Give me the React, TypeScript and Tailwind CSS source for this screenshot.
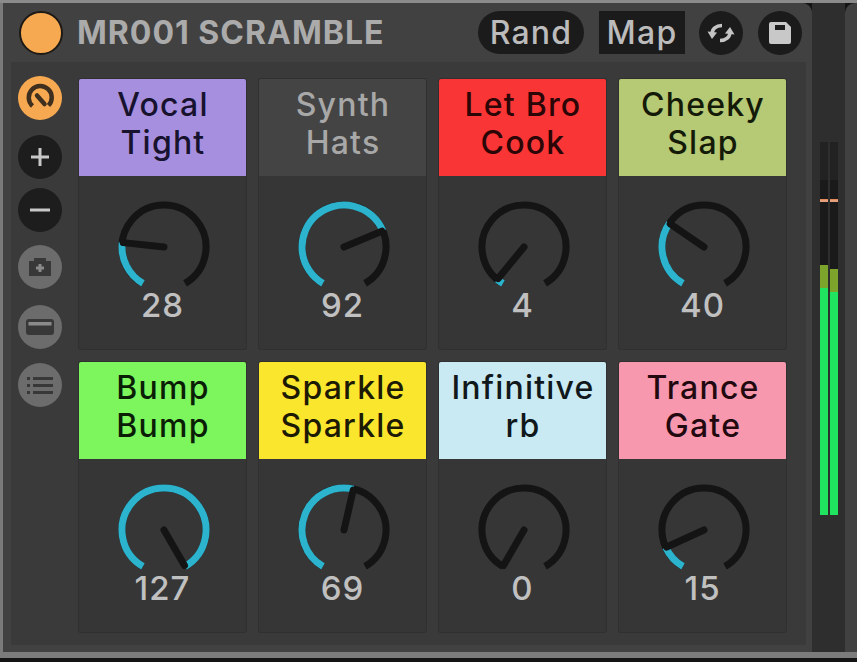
import React from "react";

const FONT = { fontFamily: 'Inter, "Liberation Sans", sans-serif' };

type Pad = { a: string; b: string; value: number; bg: string; text: string };

const pads: Pad[] = [
  { a: "Vocal", b: "Tight", value: 28, bg: "bg-[#a78fdf]", text: "text-[#17122e]" },
  { a: "Synth", b: "Hats", value: 92, bg: "bg-[#444444]", text: "text-[#a8a8a8]" },
  { a: "Let Bro", b: "Cook", value: 4, bg: "bg-[#f93535]", text: "text-[#2c0606]" },
  { a: "Cheeky", b: "Slap", value: 40, bg: "bg-[#b6c975]", text: "text-[#141a08]" },
  { a: "Bump", b: "Bump", value: 127, bg: "bg-[#7df65e]", text: "text-[#0a1e06]" },
  { a: "Sparkle", b: "Sparkle", value: 69, bg: "bg-[#fbe62e]", text: "text-[#1d1a04]" },
  { a: "Infinitive", b: "rb", value: 0, bg: "bg-[#c9e9f3]", text: "text-[#10181b]" },
  { a: "Trance", b: "Gate", value: 15, bg: "bg-[#f798ae]", text: "text-[#22090f]" },
];

function polar(r: number, deg: number) {
  const t = (deg * Math.PI) / 180;
  return [50 + r * Math.sin(t), 50 - r * Math.cos(t)];
}

function arc(r: number, from: number, to: number) {
  const [x1, y1] = polar(r, from);
  const [x2, y2] = polar(r, to);
  const large = to - from > 180 ? 1 : 0;
  return `M${x1} ${y1}A${r} ${r} 0 ${large} 1 ${x2} ${y2}`;
}

function Knob({ value }: { value: number }) {
  const start = -150;
  const end = 150;
  const angle = start + (value / 127) * (end - start);
  const [px, py] = polar(41, angle);
  return (
    <svg width="100" height="100" viewBox="0 0 100 100" className="block">
      <path d={arc(42, start, end)} fill="none" stroke="#141414" strokeWidth="7" />
      {value > 0 && <path d={arc(42, start, angle)} fill="none" stroke="#2cb3cd" strokeWidth="7" />}
      <line x1="50" y1="50" x2={px} y2={py} stroke="#141414" strokeWidth="7" strokeLinecap="round" />
    </svg>
  );
}

function PadCard({ pad }: { pad: Pad }) {
  return (
    <div className="h-[270px] w-[167px] rounded-[2px] bg-[#363636] shadow-[0_0_0_1px_#303030] overflow-hidden flex flex-col items-center">
      <div className={`h-[97px] w-full ${pad.bg} ${pad.text} flex flex-col items-center justify-center pb-[8px] pl-[1px] text-[32px] font-[450] leading-[38px] tracking-[1.2px]`}>
        <span>{pad.a}</span>
        <span>{pad.b}</span>
      </div>
      <div className="mt-[21px] ml-[3px]">
        <Knob value={pad.value} />
      </div>
      <div className="mt-[-11px] text-[33px] font-[450] leading-[38px] tracking-[1px] text-[#c0c0c0]">{pad.value}</div>
    </div>
  );
}

function Round({ className, children }: { className: string; children: React.ReactNode }) {
  return (
    <div className={`h-[44px] w-[44px] shrink-0 rounded-full flex items-center justify-center ${className}`}>
      {children}
    </div>
  );
}

function Header() {
  return (
    <div className="h-[59px] flex items-center bg-[#414141] pl-[16px] pr-[10px]">
      <div className="h-[44px] w-[44px] rounded-full bg-[#f6a950] border-2 border-[#1d1a16]" />
      <div className="ml-[14px] text-[32px] font-bold tracking-[1px] text-[#ababab]">MR001 SCRAMBLE</div>
      <div className="ml-auto h-[43px] w-[106px] rounded-full bg-[#1b1b1b] flex items-center justify-center text-[32px] font-[450] text-[#bcbcbc] tracking-[1.2px]">
        Rand
      </div>
      <div className="ml-[15px] h-[43px] w-[86px] bg-[#1b1b1b] flex items-center justify-center text-[32px] font-[450] text-[#bcbcbc] tracking-[1.2px]">
        Map
      </div>
      <Round className="ml-[14px] bg-[#1b1b1b]">
        <svg width="30" height="30" viewBox="0 0 30 30" fill="none">
          <path d="M6 16C6 11 10 7.5 16 7.5" stroke="#c4c4c4" strokeWidth="3.5" />
          <path d="M24 14C24 19 20 22.5 14 22.5" stroke="#c4c4c4" strokeWidth="3.5" />
          <path d="M1.5 13.5L11 14.5L6 21Z" fill="#c4c4c4" />
          <path d="M28.5 16.5L19 15.5L24 9Z" fill="#c4c4c4" />
        </svg>
      </Round>
      <Round className="ml-[15px] bg-[#1b1b1b]">
        <svg width="24" height="24" viewBox="0 0 24 24">
          <path d="M1 3a2 2 0 0 1 2-2h15l5 5v15a2 2 0 0 1-2 2H3a2 2 0 0 1-2-2Z" fill="#c8c8c8" />
          <rect x="7" y="4" width="10" height="5" fill="#1b1b1b" />
        </svg>
      </Round>
    </div>
  );
}

function Sidebar() {
  return (
    <div className="w-[58px] shrink-0 flex flex-col items-center">
      <Round className="bg-[#f6a950]">
        <svg width="30" height="30" viewBox="0 0 30 30" fill="none" stroke="#3f2f1e" strokeWidth="4.5">
          <path d="M7.5 23A11.5 11.5 0 1 1 23.5 22.5" />
          <path d="M12 12.5L19.5 21" strokeLinecap="round" />
        </svg>
      </Round>
      <Round className="mt-[15px] bg-[#1d1d1d]">
        <svg width="20" height="20" viewBox="0 0 20 20">
          <path d="M10 1v18M1 10h18" stroke="#c8c8c8" strokeWidth="3" />
        </svg>
      </Round>
      <Round className="mt-[9px] bg-[#1d1d1d]">
        <svg width="20" height="20" viewBox="0 0 20 20">
          <path d="M0 10h20" stroke="#c8c8c8" strokeWidth="3" />
        </svg>
      </Round>
      <Round className="mt-[13px] bg-[#6c6c6c]">
        <svg width="24" height="22" viewBox="0 0 24 22">
          <path d="M1 5h5V2h12v3h5v15H1Z" fill="#383838" />
          <path d="M12 8v8M8 12h8" stroke="#8a8a8a" strokeWidth="3" />
        </svg>
      </Round>
      <Round className="mt-[16px] bg-[#6c6c6c]">
        <svg width="30" height="18" viewBox="0 0 30 18">
          <rect x="1" y="1" width="28" height="16" rx="3" fill="#383838" />
          <rect x="3.5" y="4" width="23" height="3.5" fill="#8a8a8a" />
        </svg>
      </Round>
      <Round className="mt-[14px] bg-[#6c6c6c]">
        <svg width="26" height="20" viewBox="0 0 26 20" fill="#383838">
          <rect x="0" y="2" width="3" height="3" />
          <rect x="6" y="2" width="20" height="3" />
          <rect x="0" y="9" width="3" height="3" />
          <rect x="6" y="9" width="20" height="3" />
          <rect x="0" y="16" width="3" height="3" />
          <rect x="6" y="16" width="20" height="3" />
        </svg>
      </Round>
    </div>
  );
}

function MeterBar({ olive }: { olive: number }) {
  return (
    <div className="w-[8px] h-[373px] bg-[#1a1a1a] flex flex-col">
      <div className="h-[38px] bg-[#222222]" />
      <div className="h-[1px] mt-[19px] bg-[#e08a5c]" />
      <div className="h-[2px] bg-[#e6a07c]" />
      <div style={{ height: olive }} />
      <div className="flex-1 flex flex-col">
        <div className="h-[23px] bg-[#7da52c]" />
        <div className="flex-1 bg-[#20e35f]" />
      </div>
    </div>
  );
}

export default function App() {
  return (
    <div className="h-[662px] w-[857px] overflow-hidden flex flex-col bg-[#141414]" style={FONT}>
      <div className="h-[3px] shrink-0 bg-[#8b8b8b]" />
      <div className="h-[649px] shrink-0 flex">
        <div className="w-[3px] shrink-0 bg-[#7a7a7a]" />
        <div className="w-[809px] shrink-0 flex flex-col bg-[#414141] rounded-tr-[10px] overflow-hidden">
          <Header />
          <div className="ml-[8px] mr-[6px] h-[583px] bg-[#3a3a3a] flex pt-[14px]">
            <Sidebar />
            <div className="ml-[10px] mt-[3px] grid grid-cols-[167px_167px_167px_167px] auto-rows-[270px] gap-x-[13px] gap-y-[13px]">
              {pads.map((p, i) => (
                <PadCard key={i} pad={p} />
              ))}
            </div>
          </div>
        </div>
        <div className="w-[33px] shrink-0 bg-[#2e2e2e] pl-[8px] pt-[139px] flex gap-[2px]">
          <MeterBar olive={63} />
          <MeterBar olive={67} />
        </div>
        <div className="flex-1 bg-[#414141] rounded-tl-[10px]" />
      </div>
      <div className="h-[6px] shrink-0 bg-[#7c7c7c]" />
    </div>
  );
}
